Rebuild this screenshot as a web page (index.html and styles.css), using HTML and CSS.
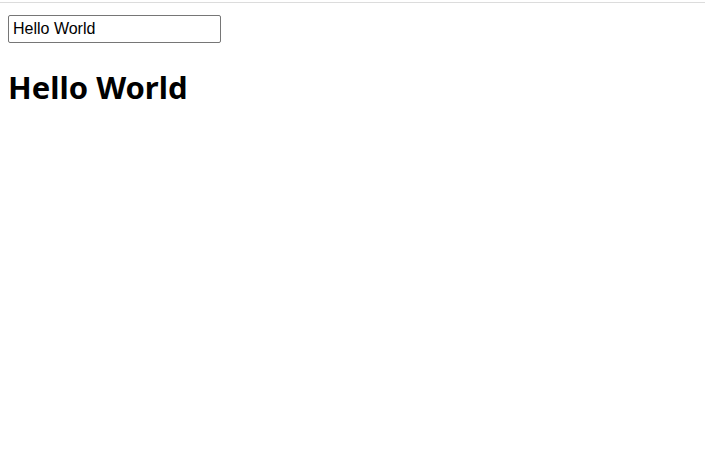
FILE: index.html
```html
<!DOCTYPE html>
<html>
<head>
<meta charset="utf-8">
<link rel="stylesheet" href="styles.css">
</head>
<body>
<div class="topbar"></div>
<main class="content">
  <input class="field" type="text" value="Hello World">
  <h1 class="title">Hello World</h1>
</main>
</body>
</html>
```
FILE: styles.css
```css
html, body {
  margin: 0;
  padding: 0;
  background: #ffffff;
}
.topbar {
  height: 2px;
  border-bottom: 1px solid #dcdcdc;
}
.content {
  padding: 12px 8px 0 8px;
  display: flex;
  flex-direction: column;
  align-items: flex-start;
}
.field {
  box-sizing: border-box;
  width: 213px;
  height: 28px;
  margin: 0;
  padding: 1px 4px;
  border: 1px solid #767676;
  border-radius: 2px;
  font-family: "Liberation Sans", Arial, sans-serif;
  font-size: 16px;
  color: #000;
  background: #fff;
}
.title {
  margin: 24px 0 0 0;
  font-family: "Noto Sans", "Open Sans", sans-serif;
  font-size: 31px;
  font-weight: 700;
  line-height: 40px;
  color: #000;
}
```
